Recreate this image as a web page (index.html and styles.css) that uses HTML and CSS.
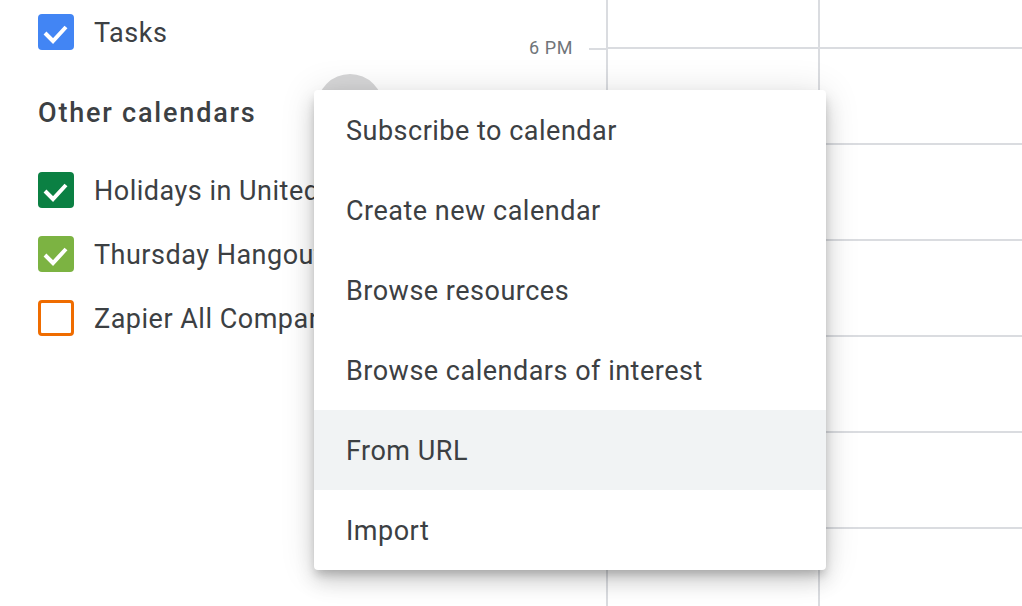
FILE: index.html
```html
<!DOCTYPE html>
<html>
<head>
<meta charset="utf-8">
<link rel="stylesheet" href="styles.css">
</head>
<body>
<div class="app">
  <aside class="sidebar">
    <div class="cal-row">
      <span class="box box-blue"><svg viewBox="0 0 36 36"><polyline points="7,19 15,27 28,13"/></svg></span>
      <span class="cal-name">Tasks</span>
    </div>
    <div class="section-title">Other calendars</div>
    <div class="cal-list">
      <div class="cal-row">
        <span class="box box-green"><svg viewBox="0 0 36 36"><polyline points="7,19 15,27 28,13"/></svg></span>
        <span class="cal-name">Holidays in United States</span>
      </div>
      <div class="cal-row">
        <span class="box box-lime"><svg viewBox="0 0 36 36"><polyline points="7,19 15,27 28,13"/></svg></span>
        <span class="cal-name">Thursday Hangouts</span>
      </div>
      <div class="cal-row">
        <span class="box box-empty"></span>
        <span class="cal-name">Zapier All Company</span>
      </div>
    </div>
  </aside>
  <div class="gutter">
    <div class="gutter-top"></div>
    <div class="gutter-row">
      <span class="time">6 PM</span>
      <span class="tick"></span>
    </div>
  </div>
  <div class="day">
    <div class="slot first"></div>
    <div class="slot"></div>
    <div class="slot"></div>
    <div class="slot"></div>
    <div class="slot"></div>
    <div class="slot"></div>
    <div class="slot"></div>
  </div>
  <div class="day wide">
    <div class="slot first"></div>
    <div class="slot"></div>
    <div class="slot"></div>
    <div class="slot"></div>
    <div class="slot"></div>
    <div class="slot"></div>
    <div class="slot"></div>
  </div>
</div>
<div class="ripple"></div>
<ul class="menu">
  <li class="item">Subscribe to calendar</li>
  <li class="item">Create new calendar</li>
  <li class="item">Browse resources</li>
  <li class="item">Browse calendars of interest</li>
  <li class="item hover">From URL</li>
  <li class="item">Import</li>
</ul>
</body>
</html>
```
FILE: styles.css
```css
* { box-sizing: border-box; }
html, body {
  margin: 0;
  padding: 0;
  width: 1022px;
  height: 606px;
  overflow: hidden;
  background: #fff;
  font-family: Roboto, "Liberation Sans", sans-serif;
  color: #3c4043;
}
.app {
  display: flex;
  height: 606px;
}
.sidebar {
  width: 500px;
  flex: none;
  padding-left: 38px;
  white-space: nowrap;
  overflow: hidden;
}
.cal-row {
  height: 64px;
  display: flex;
  align-items: center;
}
.box {
  width: 36px;
  height: 36px;
  border-radius: 4px;
  flex: none;
  margin-right: 20px;
  display: flex;
}
.box svg {
  width: 36px;
  height: 36px;
}
.box polyline {
  fill: none;
  stroke: #fff;
  stroke-width: 4;
}
.box-blue { background: #4285f4; }
.box-green { background: #0b8043; }
.box-lime { background: #7cb342; }
.box-empty { border: 3.5px solid #ef6c00; }
.cal-name {
  font-size: 27px;
  letter-spacing: 0.5px;
  padding-top: 2px;
}
.section-title {
  margin-top: 16px;
  height: 64px;
  display: flex;
  align-items: center;
  padding-top: 2px;
  font-size: 27px;
  font-weight: 500;
  letter-spacing: 1.8px;
}
.cal-list {
  margin-top: 14px;
}
.gutter {
  width: 106px;
  flex: none;
}
.gutter-top { height: 38px; }
.gutter-row {
  display: flex;
  align-items: center;
  height: 20px;
}
.time {
  width: 73px;
  text-align: right;
  font-size: 18px;
  color: #70757a;
  line-height: 20px;
  letter-spacing: 0.6px;
}
.tick {
  margin-left: 16px;
  width: 17px;
  height: 2px;
  background: #dadce0;
  margin-top: 1px;
}
.day {
  width: 212px;
  flex: none;
  border-left: 2px solid #dadce0;
}
.day.wide { flex: 1; }
.slot {
  height: 96px;
  border-bottom: 2px solid #dadce0;
}
.slot.first { height: 49px; }
.ripple {
  position: absolute;
  left: 317px;
  top: 74px;
  width: 66px;
  height: 66px;
  border-radius: 50%;
  background: #d6d6d7;
}
.menu {
  position: absolute;
  left: 314px;
  top: 90px;
  width: 512px;
  margin: 0;
  padding: 0;
  list-style: none;
  background: #fff;
  border-radius: 4px;
  box-shadow: 0 6px 10px -2px rgba(0,0,0,.2), 0 12px 20px 0 rgba(0,0,0,.14), 0 2px 36px 0 rgba(0,0,0,.12);
}
.item {
  height: 80px;
  display: flex;
  align-items: center;
  padding-top: 2px;
  padding-left: 32px;
  font-size: 27px;
  color: #3c4043;
  letter-spacing: 0.5px;
}
.item.hover { background: #f1f3f4; }
```
